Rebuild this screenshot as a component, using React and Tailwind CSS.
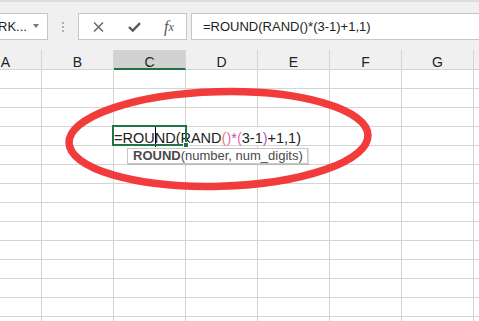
const cols = ["A", "B", "C", "D", "E", "F", "G", "H"];
const rows = Array.from({ length: 14 }, (_, i) => i + 1);

function XIcon() {
  return (
    <svg width="11" height="10" viewBox="0 0 11 10">
      <path d="M1 0.5 L10 9.5 M10 0.5 L1 9.5" stroke="#6b6b6b" strokeWidth="1.5" fill="none" />
    </svg>
  );
}

function CheckIcon() {
  return (
    <svg width="13" height="10" viewBox="0 0 13 10">
      <path d="M1 5 L4.8 8.6 L12 1.2" stroke="#5a5a5a" strokeWidth="2.4" fill="none" />
    </svg>
  );
}

function Formula() {
  return (
    <>
      <span>=ROU</span>
      <span className="relative inline-block w-0 h-0">
        <span className="absolute left-0 top-[-17px] h-[21px] w-px bg-black" />
      </span>
      <span>ND(RAND</span>
      <span className="text-[#f07a6a]">(</span>
      <span className="text-[#e070b8]">)</span>
      <span className="text-[#c4559a]">*</span>
      <span className="text-[#e070b8]">(</span>
      <span>3-1</span>
      <span className="text-[#b453c4]">)</span>
      <span>+1,1)</span>
    </>
  );
}

export default function App() {
  return (
    <div className="relative w-[479px] h-[321px] overflow-hidden bg-white font-['Liberation_Sans',Arial,sans-serif] text-[#222]">
      {/* toolbar */}
      <div className="h-[50px] bg-[#f0f0f0] border-t-2 border-[#dcdcdc] pt-[11px]">
        <div className="flex items-center h-[27px]">
          <div className="w-[48px] h-[27px] bg-white border border-l-0 border-[#c6c6c6] flex items-center text-[13px] leading-[16px] relative">
            <span className="-ml-[2px]">RK...</span>
            <span className="absolute left-[33px] top-[10px] w-0 h-0 border-l-[3.5px] border-r-[3.5px] border-t-[4px] border-l-transparent border-r-transparent border-t-[#777]" />
          </div>
          <div className="ml-[14px] flex flex-col gap-[2px]">
            <span className="w-[2px] h-[2px] bg-[#b0b0b0]" />
            <span className="w-[2px] h-[2px] bg-[#b0b0b0]" />
            <span className="w-[2px] h-[2px] bg-[#b0b0b0]" />
          </div>
          <div className="ml-[14px] w-[109px] h-[27px] bg-white border border-[#c6c6c6] flex items-center">
            <div className="flex-1 flex justify-center pl-[2px]"><XIcon /></div>
            <div className="flex-1 flex justify-center pl-[2px]"><CheckIcon /></div>
            <div className="flex-1 flex justify-center items-end font-['Liberation_Serif',serif] italic text-[#555] leading-[16px]">
              <span className="text-[16px]">f</span>
              <span className="text-[12px]">x</span>
            </div>
          </div>
          <div className="ml-[4px] flex-1 h-[27px] bg-white border border-r-0 border-[#c6c6c6] flex items-center pl-[11px] text-[13px] leading-[16px] whitespace-nowrap">
            =ROUND(RAND()*(3-1)+1,1)
          </div>
        </div>
      </div>

      {/* column headers */}
      <div className="flex h-[20px] bg-[#f0f0f0]">
        {cols.map((c, i) => (
          <div
            key={c}
            className={`shrink-0 w-[72px] h-[20px] border-r border-[#d4d4d4] flex justify-center pt-[4px] text-[14px] leading-[16px] ${
              i === 0 ? "-ml-[30px]" : ""
            } ${c === "C" ? "bg-[#d2d2d2] border-b-2 border-b-[#217346]" : "border-b"}`}
          >
            {c}
          </div>
        ))}
      </div>

      {/* grid */}
      {rows.map((r) => (
        <div key={r} className="flex h-[19px]">
          {cols.map((c, i) => (
            <div
              key={c}
              className={`relative shrink-0 w-[72px] h-[19px] border-r border-b border-[#d4d4d4] ${
                i === 0 ? "-ml-[30px]" : ""
              }`}
            >
              {r === 4 && c === "C" && (
                <>
                  <div className="absolute left-0 top-0 z-10 h-[18px] w-[214px] bg-white whitespace-nowrap text-[14.5px] leading-[22px]">
                    <Formula />
                  </div>
                  <div className="absolute left-[-2px] top-[-2px] z-20 w-[75px] h-[21px] border-2 border-[#217346]">
                    <span className="absolute right-[-4px] bottom-[-4px] w-[6px] h-[6px] bg-[#217346] border border-white" />
                  </div>
                  <div className="absolute left-[13px] top-[21px] z-20 w-[181px] h-[16px] bg-white border border-[#c6c6c6] shadow-[1px_1px_1px_rgba(0,0,0,0.12)] pl-[5px] text-[13px] leading-[14px] text-[#4a4a4a] whitespace-nowrap">
                    <span className="font-bold">ROUND</span>(number, num_digits)
                  </div>
                </>
              )}
            </div>
          ))}
        </div>
      ))}

      {/* red annotation */}
      <svg className="absolute inset-0 z-30 pointer-events-none" width="479" height="321" viewBox="0 0 479 321">
        <ellipse
          cx="218.5"
          cy="139"
          rx="149.5"
          ry="47.3"
          transform="rotate(-1.5 218.5 139)"
          fill="none"
          stroke="#f23b3b"
          strokeWidth="7.5"
        />
      </svg>
    </div>
  );
}
